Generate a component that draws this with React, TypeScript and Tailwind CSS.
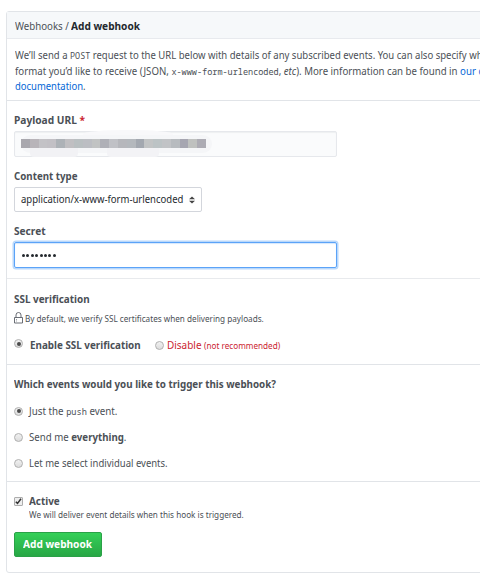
import type { ReactNode } from "react";

const mosaic = [
  "#a9a8ae", "#b8b4b9", "#c3c2c6", "#c2c0c5", "#adb2b7", "#c0bfc2", "#b9bfc1", "#bcbec3", "#c1c3c3", "#afb0b7", "#c0c1c6",
  "#b6b7bc", "#b4b8bd", "#a3a8b0", "#c2c4c5", "#bcc3c5", "#c1c3c6", "#b7bbbf", "#a6a6b1", "#bfc1bf", "#adacb4",
];

function Radio({ checked = false }: { checked?: boolean }) {
  return (
    <span className="flex h-[9px] w-[9px] shrink-0 items-center justify-center rounded-full border border-[#b0b0b0] bg-linear-to-b from-[#f1f1f1] to-[#dcdcdc]">
      {checked && <span className="h-[4px] w-[4px] rounded-full bg-[#4a4a4a]" />}
    </span>
  );
}

function Label({ children, scale = "scale-x-[0.9]" }: { children: ReactNode; scale?: string }) {
  return <div className={`h-[16px] origin-left text-[11px] font-bold leading-[16px] ${scale}`}>{children}</div>;
}

function Mono({ children }: { children: ReactNode }) {
  return <code className="font-['Noto_Sans_Mono','DejaVu_Sans_Mono',monospace] text-[9.7px]">{children}</code>;
}

export default function App() {
  return (
    <div className="h-[574px] w-[480px] overflow-hidden bg-white pl-[6px] pt-[11px] font-['Noto_Sans',sans-serif] text-[11px] text-[#4b5056]">
      <div className="h-[562px] w-[500px] whitespace-nowrap rounded-[3px] border border-[#e1e4e8]">
        <div className="flex h-[27px] items-center border-b border-[#e8eaee] bg-[#f6f8fa] pl-[7.5px] pt-[2px]">
          <span className="origin-left scale-x-[0.88]">Webhooks /&nbsp;</span>
          <b className="-ml-[7.5px] origin-left scale-x-[0.92] text-[#24292e]">Add webhook</b>
        </div>

        <div className="h-[62px] border-b border-[#e1e4e8] pl-[8px] pt-[8px] leading-[15.5px]">
          <div className="h-[15.5px] w-[530px] origin-left scale-x-[0.867]">We’ll send a <Mono>POST</Mono> request to the URL below with details of any subscribed events. You can also specify wh</div>
          <div className="h-[15.5px] w-[530px] origin-left scale-x-[0.879]">format you’d like to receive (JSON, <Mono>x-www-form-urlencoded</Mono>, <i>etc</i>). More information can be found in <a className="text-[#0366d6]">our d</a></div>
          <div className="h-[15.5px] w-[530px] origin-left scale-x-[0.86]"><a className="text-[#0366d6]">documentation</a>.</div>
        </div>

        <div className="h-[178px] border-b border-[#e8eaed] pl-[7px] pt-[11px]">
          <Label scale="scale-x-[0.925]">Payload URL <span className="text-[#cb2431]">*</span></Label>
          <div className="relative mt-[3px] flex h-[26px] w-[323px] items-start rounded-[2px] border border-[#e6e8ec] bg-[#fafbfc] pl-[6px] pt-[7px] shadow-[inset_0_1px_1px_rgba(27,31,35,0.05)]">
            <span className="absolute left-[68px] -top-[2px] h-[8px] w-[90px] rounded-t-[50%] bg-[#f8f8fa]" />
            <span className="absolute left-[6px] top-[3px] h-[18px] w-[191px] rounded-[9px] bg-[#f5f6f8]" />
            <span className="absolute left-[15px] top-[15px] h-[10px] w-[48px] rounded-b-[4px] bg-[#f2f2f5]" />
            <span className="absolute left-[92px] top-[15px] h-[10px] w-[52px] rounded-b-[4px] bg-[#f3f3f6]" />
            <div className="relative flex h-[9px] w-[185px]">
              {mosaic.map((color, i) => (
                <span key={i} className="h-full flex-1" style={{ backgroundColor: color }} />
              ))}
            </div>
          </div>
          <div className="h-[11px]" />
          <Label scale="scale-x-[0.885]">Content type</Label>
          <div className="mt-[3px] flex h-[25px] w-[188px] items-center rounded-[2px] border border-[#d3d6dc] bg-white pl-[6px] text-[#24292e]">
            <span className="w-[168px]"><span className="inline-block origin-left scale-x-[0.865]">application/x-www-form-urlencoded</span></span>
            <svg className="shrink-0" width="6" height="8" viewBox="0 0 6 8" fill="#444"><path d="M0 3.2L3 .5l3 2.7zM0 4.8l3 2.7 3-2.7z" /></svg>
          </div>
          <div className="h-[11px]" />
          <Label scale="scale-x-[0.92]">Secret</Label>
          <div className="mt-[3px] flex h-[26px] w-[323px] items-center gap-[1.4px] rounded-[2px] border border-[#5ba3f8] pl-[7px] shadow-[0_0_0_1.5px_#b9d8fb,inset_0_1px_1px_#d5e7fc]">
            {Array.from({ length: 8 }, (_, i) => <span key={i} className="h-[3px] w-[3px] rounded-full bg-[#24292e]" />)}
          </div>
        </div>

        <div className="h-[86px] border-b border-[#e1e4e8] pl-[7.4px] pt-[12px]">
          <Label>SSL verification</Label>
          <div className="mt-[4px] flex h-[16px] items-center text-[9px]">
            <svg className="mr-[2px] mb-[3px]" width="9" height="12" viewBox="0 0 9 12" fill="none" stroke="#5a5f66" strokeWidth=".9"><path d="M.5 5.5h8v5.5h-8zM2 5.5V3a2.5 2.5 0 0 1 5 0v2.5" /><path d="M2 7.5h1M2 9h1" strokeWidth=".6" /></svg>
            <span className="origin-left scale-x-[0.907]">By default, we verify SSL certificates when delivering payloads.</span>
          </div>
          <div className="mt-[10px] flex h-[16px] items-center">
            <span className="mb-[3px]"><Radio checked /></span>
            <b className="ml-[6.5px] w-[125px]"><span className="inline-block origin-left scale-x-[0.895]">Enable SSL verification</span></b>
            <Radio />
            <span className="ml-[3px] origin-left scale-x-[0.905] text-[#cb2431]">Disable <span className="text-[9px]">(not recommended)</span></span>
          </div>
        </div>

        <div className="h-[117px] border-b border-[#e1e4e8] pl-[7.4px] pt-[11px]">
          <Label scale="scale-x-[0.891]">Which events would you like to trigger this webhook?</Label>
          <div className="mt-[6px] flex h-[26px] items-center gap-[5.6px]"><Radio checked /><span className="origin-left scale-x-[0.89]">Just the <Mono>push</Mono> event.</span></div>
          <div className="flex h-[26px] items-center gap-[5.6px]"><Radio /><span className="origin-left scale-x-[0.88]">Send me <b>everything</b>.</span></div>
          <div className="flex h-[26px] items-center gap-[5.6px]"><Radio /><span className="origin-left scale-x-[0.863]">Let me select individual events.</span></div>
        </div>

        <div className="pl-[7px] pt-[11px]">
          <div className="flex h-[16px] items-center gap-[5.6px]">
            <span className="ml-[0.4px] flex h-[9px] w-[9px] items-center justify-center rounded-[1px] border border-[#adadad] bg-[#eeeeee]">
              <svg width="7" height="7" viewBox="0 0 7 7" fill="none" stroke="#333" strokeWidth="1.5"><path d="M.8 3.7L2.5 5.4 6 .8" /></svg>
            </span>
            <b className="origin-left scale-x-[0.9]">Active</b>
          </div>
          <div className="ml-[15px] h-[12px] w-[260px] origin-left scale-x-[0.907] text-[9px] leading-[12px]">We will deliver event details when this hook is triggered.</div>
          <button className="mt-[11px] flex h-[25px] w-[88px] items-center justify-center rounded-[2px] border border-[#2aa147] bg-linear-to-b from-[#34d058] to-[#28a745] text-[11px] font-bold text-white"><span className="scale-x-[0.92]">Add webhook</span></button>
        </div>
      </div>
    </div>
  );
}
